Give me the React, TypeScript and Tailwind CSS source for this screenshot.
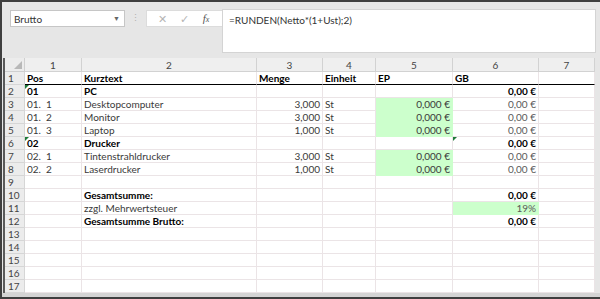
import React from "react";

type Cell = { t?: string; b?: boolean; r?: boolean; g?: boolean; tri?: boolean; muted?: boolean };

const cols = [57, 175, 66, 53, 77, 86, 56];

const e: Cell = {};

const rows: Cell[][] = [
  [{ t: "Pos", b: true }, { t: "Kurztext", b: true }, { t: "Menge", b: true }, { t: "Einheit", b: true }, { t: "EP", b: true }, { t: "GB", b: true }, e],
  [{ t: "01", b: true, tri: true }, { t: "PC", b: true }, e, e, e, { t: "0,00 €", b: true, r: true }, e],
  [{ t: "01.  1" }, { t: "Desktopcomputer" }, { t: "3,000", r: true }, { t: "St" }, { t: "0,000 €", r: true, g: true }, { t: "0,00 €", r: true, muted: true }, e],
  [{ t: "01.  2" }, { t: "Monitor" }, { t: "3,000", r: true }, { t: "St" }, { t: "0,000 €", r: true, g: true }, { t: "0,00 €", r: true, muted: true }, e],
  [{ t: "01.  3" }, { t: "Laptop" }, { t: "1,000", r: true }, { t: "St" }, { t: "0,000 €", r: true, g: true }, { t: "0,00 €", r: true, muted: true }, e],
  [{ t: "02", b: true, tri: true }, { t: "Drucker", b: true }, e, e, e, { t: "0,00 €", b: true, r: true, tri: true }, e],
  [{ t: "02.  1" }, { t: "Tintenstrahldrucker" }, { t: "3,000", r: true }, { t: "St" }, { t: "0,000 €", r: true, g: true }, { t: "0,00 €", r: true, muted: true }, e],
  [{ t: "02.  2" }, { t: "Laserdrucker" }, { t: "1,000", r: true }, { t: "St" }, { t: "0,000 €", r: true, g: true }, { t: "0,00 €", r: true, muted: true }, e],
  [e, e, e, e, e, e, e],
  [e, { t: "Gesamtsumme:", b: true }, e, e, e, { t: "0,00 €", b: true, r: true }, e],
  [e, { t: "zzgl. Mehrwertsteuer" }, e, e, e, { t: "19%", r: true, g: true, muted: true }, e],
  [e, { t: "Gesamtsumme Brutto:", b: true }, e, e, e, { t: "0,00 €", b: true, r: true }, e],
  [e, e, e, e, e, e, e],
  [e, e, e, e, e, e, e],
  [e, e, e, e, e, e, e],
  [e, e, e, e, e, e, e],
  [e, e, e, e, e, e, e],
];

const App = () => {
  return (
    <div
      className="w-[600px] h-[299px] overflow-hidden bg-[#e6e6e6] border-t-2 border-l-2 border-b-2 border-[#3f3f3f] flex flex-col text-[10px] leading-none"
      style={{ fontFamily: "Lato, 'Liberation Sans', sans-serif" }}
    >
      {/* toolbar */}
      <div className="h-[56px] flex pt-[7px] pl-[8px] pr-[4px]">
        <div className="w-[115px] h-[17px] mt-[1px] bg-white border border-[#c6c6c6] flex items-center justify-between pl-[3px] pr-[4px] text-[#333]">
          <span>Brutto</span>
          <span className="text-[7px] text-[#666]">▼</span>
        </div>
        <div className="w-[21px] flex justify-center pt-[4px] text-[#b0b0b0] text-[9px]">⋮</div>
        <div className="w-[76px] h-[17px] mt-[1px] bg-white border border-[#dcdcdc] border-r-0 flex items-center justify-around pl-[4px] pr-[6px]">
          <span className="text-[#b5b5b5] text-[11px]">✕</span>
          <span className="text-[#b5b5b5] text-[11px]">✓</span>
          <span className="text-[#555] italic text-[11px]" style={{ fontFamily: "'Liberation Serif', serif" }}>
            f<span className="text-[8px]">x</span>
          </span>
        </div>
        <div className="flex-1 h-[44px] bg-white border border-[#d4d4d4] pl-[6px] pt-[5px] text-[#333]">
          =RUNDEN(Netto*(1+Ust);2)
        </div>
      </div>

      {/* sheet */}
      <div className="flex-1 flex pl-[1px] pr-[3px]">
        <div className="border-l-2 border-[#5a5a5a] flex flex-col">
          {/* column header */}
          <div className="flex h-[14px]">
            <div className="w-[20px] bg-[#ececec] border-r border-b border-[#cfcfcf] relative">
              <div className="absolute right-[2px] bottom-[2px] w-0 h-0 border-l-[8px] border-l-transparent border-b-[8px] border-b-[#b8b8b8]" />
            </div>
            {cols.map((w, i) => (
              <div
                key={i}
                style={{ width: w }}
                className="bg-[#efefef] border-r border-b border-[#d2d2d2] flex items-center justify-center text-[#444]"
              >
                {i + 1}
              </div>
            ))}
          </div>
          {rows.map((row, ri) => (
            <div key={ri} className="flex h-[13px]">
              <div className="w-[20px] bg-[#ececec] border-r border-b border-[#d6d6d6] flex items-center pl-[3px] text-[#444]">
                {ri + 1}
              </div>
              {row.map((c, ci) => (
                <div
                  key={ci}
                  style={{ width: cols[ci] }}
                  className={`relative flex items-center px-[2px] whitespace-pre overflow-hidden border-r border-b ${
                    c.g ? "bg-[#ccffcc] border-[#ccffcc]" : "bg-white border-[#ebe4e6]"
                  } ${ri === 0 ? "border-b-black" : ""} ${c.r ? "justify-end" : "justify-start"} ${
                    c.b ? "font-bold text-black" : c.muted ? "text-[#5a5a5a]" : "text-[#3a3a3a]"
                  }`}
                >
                  {c.tri && (
                    <div className="absolute left-0 top-0 w-0 h-0 border-t-[4px] border-t-[#1f7a3a] border-r-[4px] border-r-transparent" />
                  )}
                  {c.t}
                </div>
              ))}
            </div>
          ))}
        </div>
        <div className="flex-1" />
      </div>
      <div className="h-[4px] bg-[#d4d4d4]" />
    </div>
  );
};

export default App;
